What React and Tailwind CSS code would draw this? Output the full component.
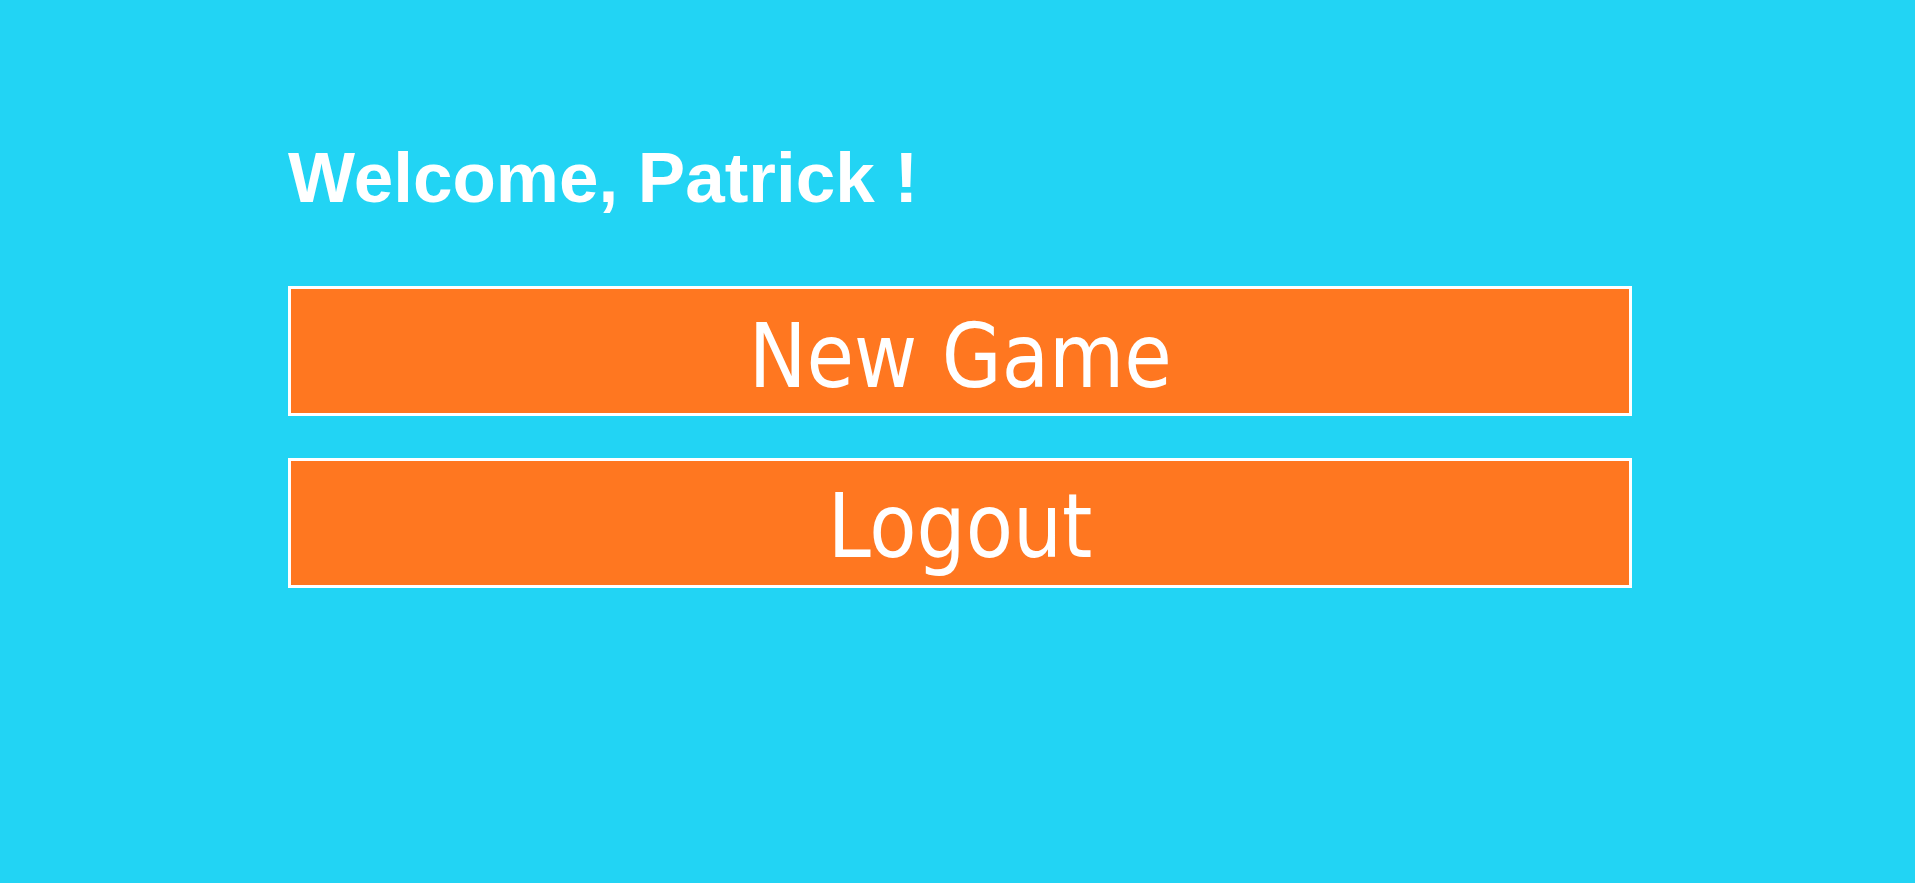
export default function App() {
  return (
    <div className="min-h-screen w-full bg-[#22d4f4] pt-[142px]">
      <h1 className="ml-[288px] whitespace-nowrap text-[71px] leading-none font-bold text-white font-['Liberation_Sans',Arial,sans-serif]">
        Welcome, Patrick !
      </h1>

      <div className="ml-[288px] mt-[73px] flex w-[1344px] flex-col gap-[42px]">
        <MenuButton label="New Game" pad="pt-[23px]" />
        <MenuButton label="Logout" pad="pt-[21px]" />
      </div>
    </div>
  )
}

function MenuButton({ label, pad }) {
  return (
    <button
      className={`flex h-[130px] w-full justify-center border-[3px] border-white bg-[#ff7720] ${pad}`}
    >
      <span className="inline-block scale-x-[0.965] whitespace-nowrap text-[89px] leading-none text-white font-['DejaVu_Sans_Condensed','DejaVu_Sans',Tahoma,sans-serif] [font-stretch:condensed]">
        {label}
      </span>
    </button>
  )
}
